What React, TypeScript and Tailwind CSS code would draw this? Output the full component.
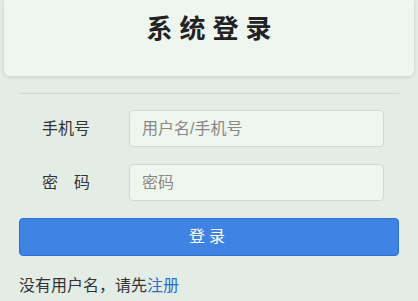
import { useState } from "react";

export default function App() {
  const [phone, setPhone] = useState("");
  const [password, setPassword] = useState("");

  return (
    <div
      className="min-h-[301px] w-full bg-[#e4ece6] px-[4px]"
      style={{ fontFamily: '"Liberation Sans", "Noto Sans CJK SC", sans-serif' }}
    >
      <div className="flex h-[76px] justify-center rounded-b-[6px] bg-[#eef6ef] pt-[11px] shadow-[0_1px_4px_rgba(0,0,0,0.12)]">
        <h1 className="h-[36px] pl-[7px] text-[26px] leading-[36px] font-bold tracking-[7px] text-[#222]">系统登录</h1>
      </div>

      <div className="px-[15px]">
        <div className="mt-[17px] border-t border-[#cfd8d1]" />

        <div className="mt-[16px] flex items-center">
          <label className="w-[110px] pl-[23px] text-[16px] text-[#333]">手机号</label>
          <input
            value={phone}
            onChange={(e) => setPhone(e.target.value)}
            placeholder="用户名/手机号"
            className="h-[37px] w-[255px] rounded-[4px] border border-[#cfd8d1] bg-[#eef6ef] px-[12px] text-[16px] text-[#333] outline-none placeholder:text-[#888]"
          />
        </div>

        <div className="mt-[17px] flex items-center">
          <label className="w-[110px] pl-[23px] text-[16px] text-[#333]">
            密<span className="ml-[16px]">码</span>
          </label>
          <input
            type="text"
            value={password}
            onChange={(e) => setPassword(e.target.value)}
            placeholder="密码"
            className="h-[37px] w-[255px] rounded-[4px] border border-[#cfd8d1] bg-[#eef6ef] px-[12px] text-[16px] text-[#333] outline-none placeholder:text-[#888]"
          />
        </div>

        <button
          type="button"
          className="mt-[17px] h-[38px] w-[380px] rounded-[4px] border border-[#2f6fcf] bg-[#3f84e5] text-[16px] tracking-[4px] text-white"
        >
          登录
        </button>

        <p className="mt-[18px] text-[16px] text-[#333]">
          没有用户名，请先<a className="text-[#2a6fc9]">注册</a>
        </p>
      </div>
    </div>
  );
}
